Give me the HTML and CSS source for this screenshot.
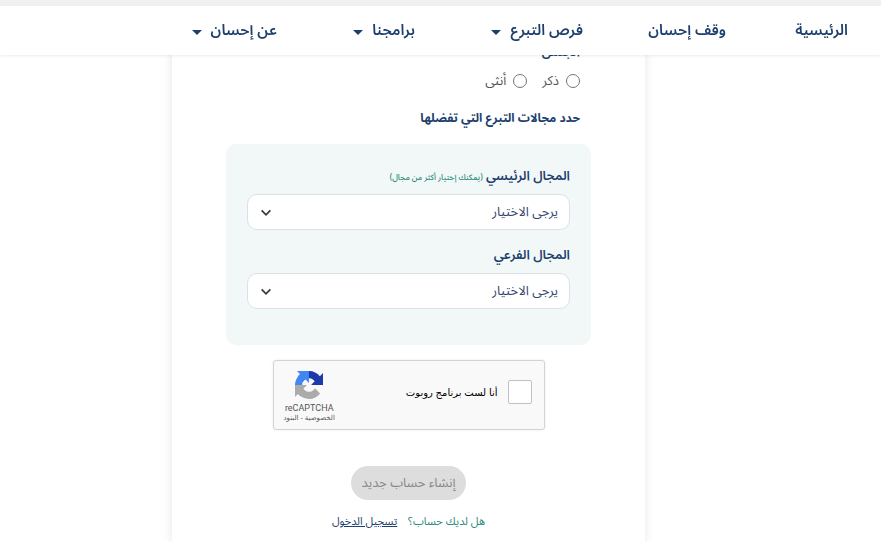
FILE: index.html
```html
<!DOCTYPE html>
<html lang="ar" dir="rtl">
<head>
    <meta charset="UTF-8">
    <meta name="viewport" content="width=device-width, initial-scale=1.0">
    <title>إنشاء حساب جديد</title>
    <link rel="stylesheet" href="styles.css">
</head>
<body>
    <header class="header">
        <nav class="nav">
            <a href="#">الرئيسية</a>
            <a href="#">وقف إحسان</a>
            <a href="#" class="has-menu">فرص التبرع</a>
            <a href="#" class="has-menu">برامجنا</a>
            <a href="#" class="has-menu">عن إحسان</a>
        </nav>
    </header>

    <main class="page">
        <form class="card">
            <fieldset class="gender">
                <legend>الجنس</legend>
                <div class="radios">
                    <label><input type="radio" name="gender" value="m">ذكر</label>
                    <label><input type="radio" name="gender" value="f">أنثى</label>
                </div>
            </fieldset>

            <h2 class="title">حدد مجالات التبرع التي تفضلها</h2>

            <div class="fields">
                <label for="mainField">المجال الرئيسي <small>(يمكنك إختيار أكثر من مجال)</small></label>
                <div class="select-box">
                    <select id="mainField">
                        <option>يرجى الاختيار</option>
                    </select>
                    <svg class="arrow" viewBox="0 0 16 16"><path d="M3 5l5 5 5-5"/></svg>
                </div>
                <label for="subField">المجال الفرعي</label>
                <div class="select-box">
                    <select id="subField">
                        <option>يرجى الاختيار</option>
                    </select>
                    <svg class="arrow" viewBox="0 0 16 16"><path d="M3 5l5 5 5-5"/></svg>
                </div>
            </div>

            <div class="captcha">
                <input type="checkbox" id="robot">
                <label for="robot">أنا لست برنامج روبوت</label>
                <div class="captcha-brand">
                    <svg width="28" height="28" viewBox="0 0 64 64">
                        <path fill="#1c3aa9" d="M64 31.955l-.033-1.37V4.687l-7.16 7.16C50.948 4.674 42.033.093 32.05.093c-10.4 0-19.622 4.96-25.458 12.64l11.736 11.86a15.55 15.55 0 0 1 4.754-5.334c2.05-1.6 4.952-2.906 8.968-2.906.485 0 .86.057 1.135.163 4.976.393 9.288 3.14 11.828 7.124l-8.307 8.307L64 31.953"/>
                        <path fill="#4285f4" d="M31.862.094l-1.37.033H4.594l7.16 7.16C4.58 13.147 0 22.06 0 32.046c0 10.4 4.96 19.622 12.64 25.458L24.5 45.768a15.55 15.55 0 0 1-5.334-4.754c-1.6-2.05-2.906-4.952-2.906-8.968 0-.485.057-.86.163-1.135.393-4.976 3.14-9.288 7.124-11.828l8.307 8.307L31.86.095"/>
                        <path fill="#ababab" d="M.001 32.045l.033 1.37v25.898l7.16-7.16c5.86 7.173 14.774 11.754 24.76 11.754 10.4 0 19.622-4.96 25.458-12.64l-11.736-11.86a15.55 15.55 0 0 1-4.754 5.334c-2.05 1.6-4.952 2.906-8.968 2.906-.485 0-.86-.057-1.135-.163-4.976-.393-9.288-3.14-11.828-7.124l8.307-8.307c-10.522.04-22.4.066-27.295-.005"/>
                    </svg>
                    <span class="captcha-name">reCAPTCHA</span>
                    <span class="captcha-links"><a href="#">الخصوصية</a> - <a href="#">البنود</a></span>
                </div>
            </div>

            <button type="submit" class="submit-btn" disabled>إنشاء حساب جديد</button>
            <p class="login">هل لديك حساب؟ <a href="#">تسجيل الدخول</a></p>
        </form>
    </main>
</body>
</html>
```
FILE: styles.css
```css
* {
    box-sizing: border-box;
}
body {
    margin: 0;
    background: #fff;
    color: #1d3f6e;
    font-family: "Noto Sans Arabic", "Noto Sans", "DejaVu Sans", sans-serif;
    font-size: 13px;
    line-height: 20px;
}
a {
    color: inherit;
    text-decoration: none;
}
.header {
    position: fixed;
    top: 0;
    left: 0;
    right: 0;
    z-index: 10;
    background: #fff;
    border-top: 6px solid #f0f0f0;
    box-shadow: 0 1px 3px rgba(0,0,0,0.08);
}
.nav {
    display: grid;
    grid-template-columns: 122px 143px 168px 138px auto;
    padding: 12px 33px 13px;
    font-size: 15px;
    font-weight: 600;
    line-height: 24px;
    white-space: nowrap;
}
.has-menu::after {
    content: '';
    display: inline-block;
    margin-right: 9px;
    border: 5px solid transparent;
    border-top-color: #1d3f6e;
    border-bottom: 0;
}
.page {
    padding-top: 42px;
    padding-right: 64px;
    overflow: hidden;
}
.card {
    display: flex;
    flex-direction: column;
    align-items: center;
    max-width: 473px;
    margin: 0 auto;
    padding: 0 54px 10px;
    box-shadow: 0 0 10px rgba(0,0,0,0.1);
}
.gender {
    align-self: stretch;
    margin: 0;
    padding: 0 11px;
    border: 0;
}
.gender legend {
    padding: 0;
    font-weight: 600;
}
.radios {
    display: flex;
    gap: 15px;
    margin-top: 9px;
    color: #555;
}
.radios label {
    display: flex;
    align-items: center;
    gap: 7px;
}
.radios input {
    width: 14px;
    height: 14px;
    margin: 0;
}
.title {
    align-self: stretch;
    margin: 18px 11px 15px;
    font-size: 12px;
    font-weight: 700;
}
.fields {
    align-self: stretch;
    padding: 22px 21px 36px;
    border-radius: 10px;
    background: #f2f8f8;
}
.fields label {
    display: block;
    margin-bottom: 8px;
    font-weight: 600;
}
.fields small {
    color: #2b8a78;
    font-size: 8px;
    font-weight: 500;
    line-height: 1;
}
.select-box {
    position: relative;
}
.select-box + label {
    margin-top: 15px;
}
.arrow {
    position: absolute;
    left: 12px;
    top: 12px;
    width: 14px;
    height: 14px;
    fill: none;
    stroke: #343a40;
    stroke-width: 2;
    pointer-events: none;
}
.select-box select {
    display: block;
    appearance: none;
    width: 100%;
    height: 36px;
    padding: 0 11px;
    border: 1px solid #dbe1e6;
    border-radius: 10px;
    background: #fff;
    color: #34466a;
    font: inherit;
}
.captcha {
    display: flex;
    align-items: flex-start;
    width: 272px;
    height: 70px;
    margin-top: 15px;
    padding: 10px 12px 0 10px;
    border: 1px solid #d3d3d3;
    border-radius: 3px;
    background: #f9f9f9;
    box-shadow: 0 0 3px rgba(0,0,0,0.08);
    color: #000;
    font-family: "Liberation Sans", "DejaVu Sans", sans-serif;
    font-size: 10px;
}
.captcha input {
    appearance: none;
    width: 24px;
    height: 24px;
    margin: 9px 0 0 10px;
    border: 1px solid #c1c1c1;
    border-radius: 2px;
    background: #fff;
}
.captcha label {
    margin-top: 12px;
}
.captcha-brand {
    display: flex;
    flex-direction: column;
    align-items: center;
    margin-right: auto;
    color: #555;
}
.captcha-name {
    margin-top: 3px;
    font-family: Roboto, "Liberation Sans", sans-serif;
    font-size: 9px;
    line-height: 12px;
}
.captcha-links {
    font-size: 7px;
    line-height: 8px;
}
.submit-btn {
    height: 34px;
    margin-top: 36px;
    padding: 0 10px;
    border: 0;
    border-radius: 17px;
    background: #ddd;
    color: #888;
    font: inherit;
}
.login {
    margin: 12px 0 0;
    color: #2b8a78;
    font-size: 11px;
}
.login a {
    margin-right: 8px;
    color: #1d3f6e;
    text-decoration: underline;
}
```
